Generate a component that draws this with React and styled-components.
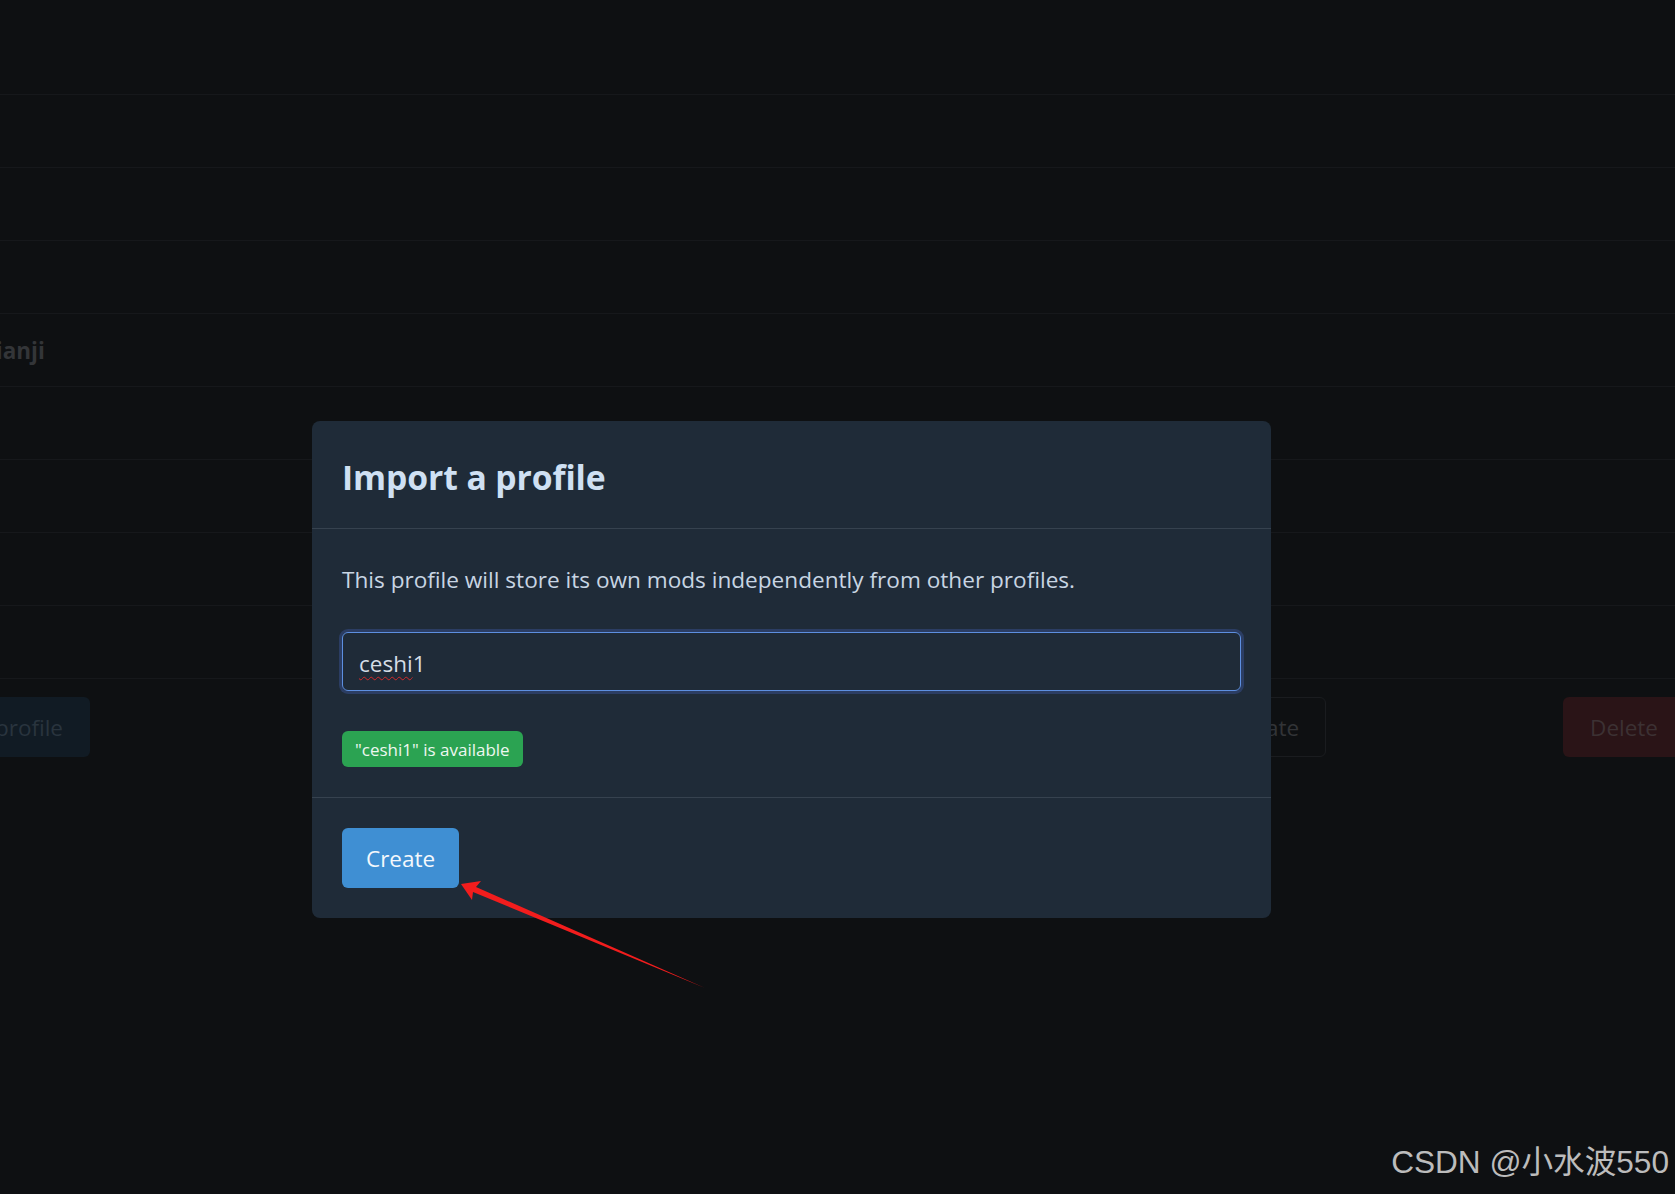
import React from "react";
import styled, { createGlobalStyle } from "styled-components";

const GlobalStyle = createGlobalStyle`
  html, body {
    margin: 0;
    padding: 0;
    background: #0e1012;
  }
  body {
    font-family: "Open Sans", "Noto Sans", sans-serif;
  }
  * { box-sizing: border-box; }
`;

const Screen = styled.div`
  position: relative;
  width: 100%;
  height: 1194px;
  overflow: hidden;
  background: #0e1012;
`;

const Backdrop = styled.div`
  display: flex;
  flex-direction: column;
  width: 100%;
`;

const TopBar = styled.div`
  height: 95px;
  border-bottom: 1px solid #16181b;
`;

const ProfileRow = styled.div`
  height: 73px;
  display: flex;
  align-items: center;
  border-bottom: 1px solid #16181b;
`;

const ProfileName = styled.span`
  margin-left: -11px;
  font-size: 22.5px;
  font-weight: 700;
  color: #333538;
  white-space: nowrap;
`;

const ActionBar = styled.div`
  display: flex;
  align-items: center;
  padding-top: 18px;
`;

const BgButton = styled.div`
  flex-shrink: 0;
  height: 60px;
  display: flex;
  align-items: center;
  padding: 0 26px;
  border-radius: 6px;
  font-size: 22.5px;
  white-space: nowrap;
  border: 1px solid ${(p) => p.$border || "transparent"};
  background: ${(p) => p.$bg || "transparent"};
  color: ${(p) => p.$fg};
`;

const SelectButton = styled(BgButton)`
  margin-left: -100px;
`;

const ImportButton = styled(BgButton)`
  margin-left: auto;
`;

const DeleteButton = styled(BgButton)`
  margin-left: 237px;
  margin-right: -10px;
`;

const Overlay = styled.div`
  position: absolute;
  inset: 0;
  display: flex;
  align-items: flex-start;
  padding: 421px 0 0 312px;
`;

const Modal = styled.div`
  width: 959px;
  background: #1f2b38;
  border-radius: 8px;
  display: flex;
  flex-direction: column;
`;

const ModalHeader = styled.header`
  height: 108px;
  display: flex;
  align-items: center;
  padding: 4px 30px 0;
  border-bottom: 1px solid #36424f;
`;

const Title = styled.h2`
  margin: 0;
  font-size: 33.7px;
  font-weight: 700;
  color: #cfe0f3;
  letter-spacing: -0.1px;
`;

const ModalBody = styled.section`
  display: flex;
  flex-direction: column;
  align-items: flex-start;
  padding: 33px 30px 30px;
  border-bottom: 1px solid #36424f;
`;

const Description = styled.p`
  margin: 0;
  font-size: 22.6px;
  line-height: 36px;
  color: #c8d5e3;
`;

const Field = styled.div`
  width: 100%;
  height: 59px;
  margin-top: 34px;
  display: flex;
  align-items: center;
  padding: 4px 16px 0;
  border: 1.5px solid #5d8fe0;
  border-radius: 6px;
  box-shadow: 0 0 0 3px #2b3d63;
  font-size: 22.5px;
  color: #d5dde6;
`;

const Misspelled = styled.span`
  text-decoration: underline wavy #d12a2a;
  text-decoration-thickness: 1px;
  text-underline-offset: 4px;
  text-decoration-skip-ink: none;
`;

const Badge = styled.span`
  margin-top: 40px;
  height: 36px;
  display: inline-flex;
  align-items: center;
  padding: 0 13px;
  border-radius: 6px;
  background: #2ba352;
  color: #eef7f0;
  font-size: 17px;
`;

const ModalFooter = styled.footer`
  padding: 30px;
  display: flex;
`;

const PrimaryButton = styled.button`
  height: 60px;
  padding: 0 24px;
  border: none;
  border-radius: 6px;
  background: #3f8fd3;
  color: #f4f8fc;
  font-family: inherit;
  font-size: 22.5px;
  cursor: pointer;
`;

const Annotation = styled.svg`
  position: absolute;
  left: 0;
  top: 0;
  width: 1675px;
  height: 1194px;
  pointer-events: none;
`;

const Watermark = styled.div`
  position: absolute;
  right: 6px;
  bottom: 12px;
  font-family: "Liberation Sans", "Noto Sans CJK SC", sans-serif;
  font-size: 31.6px;
  color: #bcbcbc;
  white-space: nowrap;
`;

const rows = ["", "", "", "jianji", "", "", "", ""];

export default function App() {
  return (
    <>
      <GlobalStyle />
      <Screen>
        <Backdrop>
          <TopBar />
          {rows.map((name, i) => (
            <ProfileRow key={i}>{name && <ProfileName>{name}</ProfileName>}</ProfileRow>
          ))}
          <ActionBar>
            <SelectButton $bg="#111b24" $fg="#29343e">Select profile</SelectButton>
            <ImportButton $border="#1a1c1f" $fg="#323437">Import / Update</ImportButton>
            <DeleteButton $bg="#2a1417" $fg="#3c3133">Delete</DeleteButton>
          </ActionBar>
        </Backdrop>

        <Overlay>
          <Modal>
            <ModalHeader>
              <Title>Import a profile</Title>
            </ModalHeader>
            <ModalBody>
              <Description>
                This profile will store its own mods independently from other profiles.
              </Description>
              <Field role="textbox">
                <Misspelled>ceshi</Misspelled>1
              </Field>
              <Badge>"ceshi1" is available</Badge>
            </ModalBody>
            <ModalFooter>
              <PrimaryButton>Create</PrimaryButton>
            </ModalFooter>
          </Modal>
        </Overlay>

        <Annotation viewBox="0 0 1675 1194">
          <polygon
            points="461,884 481,881 476,887 705,988 473,892 472,900"
            fill="#f21d1d"
          />
        </Annotation>

        <Watermark>CSDN @小水波550</Watermark>
      </Screen>
    </>
  );
}
